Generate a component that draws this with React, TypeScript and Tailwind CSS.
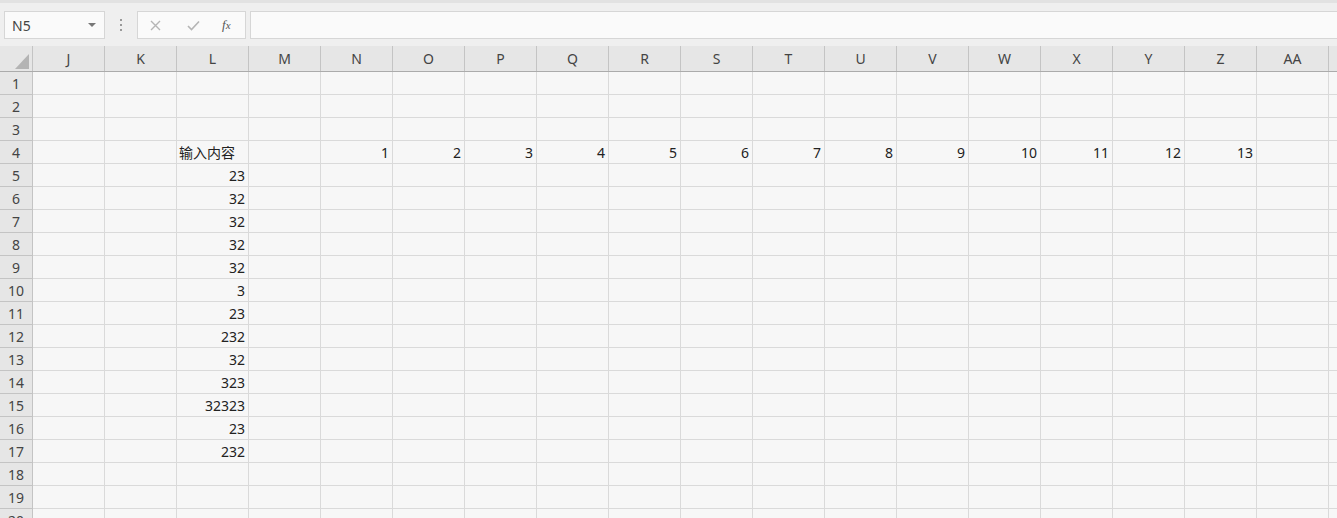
import React from "react";

const cols = ["J", "K", "L", "M", "N", "O", "P", "Q", "R", "S", "T", "U", "V", "W", "X", "Y", "Z", "AA", ""];

const lData: Record<number, string> = {
  5: "23",
  6: "32",
  7: "32",
  8: "32",
  9: "32",
  10: "3",
  11: "23",
  12: "232",
  13: "32",
  14: "323",
  15: "32323",
  16: "23",
  17: "232",
};

const rows = Array.from({ length: 20 }, (_, i) => i + 1);

function cellText(row: number, col: string) {
  if (col === "L" && row === 4) return { text: "输入内容", left: true };
  if (col === "L" && lData[row]) return { text: lData[row], left: false };
  if (row === 4) {
    const idx = cols.indexOf(col) - cols.indexOf("N");
    if (idx >= 0 && idx < 13) return { text: String(idx + 1), left: false };
  }
  return null;
}

export default function App() {
  return (
    <div
      className="w-[1337px] h-[518px] overflow-hidden bg-[#f7f7f7] text-[#222]"
      style={{ fontFamily: '"Noto Sans", "Noto Sans CJK SC", sans-serif' }}
    >
      {/* formula bar */}
      <div className="h-[46px] bg-[#efefef] border-t-[3px] border-[#e2e2e2] flex items-start pt-[8px]">
        <div className="ml-[4px] w-[101px] h-[28px] bg-[#fafafa] border border-[#d6d6d6] flex items-center justify-between pl-[7px] pr-[8px]">
          <span className="text-[14px] text-[#444]">N5</span>
          <span className="w-0 h-0 border-l-[4px] border-r-[4px] border-t-[4px] border-l-transparent border-r-transparent border-t-[#777]" />
        </div>
        <div className="w-[32px] h-[28px] flex flex-col items-center justify-center gap-[3px]">
          <span className="w-[2px] h-[2px] bg-[#999]" />
          <span className="w-[2px] h-[2px] bg-[#999]" />
          <span className="w-[2px] h-[2px] bg-[#999]" />
        </div>
        <div className="w-[109px] h-[28px] bg-[#fafafa] border border-[#d6d6d6] flex items-center">
          <svg className="ml-[12px]" width="11" height="11" viewBox="0 0 11 11">
            <path d="M1 1 L10 10 M10 1 L1 10" stroke="#b5b5b5" strokeWidth="1.4" fill="none" />
          </svg>
          <svg className="ml-[26px]" width="13" height="11" viewBox="0 0 13 11">
            <path d="M1 6 L4.5 9.5 L12 1.5" stroke="#b5b5b5" strokeWidth="1.6" fill="none" />
          </svg>
          <span
            className="ml-[22px] text-[13px] italic text-[#555]"
            style={{ fontFamily: '"Liberation Serif", serif' }}
          >
            f<span className="text-[11px]">x</span>
          </span>
        </div>
        <div className="ml-[4px] flex-1 h-[28px] bg-[#fafafa] border border-[#d6d6d6] border-r-0" />
      </div>

      {/* header row */}
      <div className="flex h-[26px] bg-[#e6e6e6] border-b border-[#ababab]">
        <div className="w-[33px] shrink-0 border-r border-[#c4c4c4] relative">
          <svg className="absolute left-[15px] top-[8px]" width="14" height="15" viewBox="0 0 14 15">
            <path d="M14 0 L14 15 L0 15 Z" fill="#b4b4b4" />
          </svg>
        </div>
        {cols.map((c, i) => (
          <div
            key={i}
            className="w-[72px] shrink-0 border-r border-[#c4c4c4] flex items-center justify-center text-[14px] text-[#444]"
          >
            {c}
          </div>
        ))}
      </div>

      {/* rows */}
      {rows.map((r) => (
        <div key={r} className="flex h-[23px]">
          <div className="w-[33px] shrink-0 bg-[#e6e6e6] border-r border-b border-[#c4c4c4] flex items-center justify-center text-[14px] text-[#444]">
            {r}
          </div>
          {cols.map((c, i) => {
            const t = cellText(r, c);
            return (
              <div
                key={i}
                className={`w-[72px] shrink-0 border-r border-b border-[#dadada] flex items-center text-[14px] whitespace-nowrap ${
                  t && t.left ? "justify-start pl-[2px]" : "justify-end pr-[3px]"
                }`}
              >
                {t ? t.text : ""}
              </div>
            );
          })}
        </div>
      ))}
    </div>
  );
}
